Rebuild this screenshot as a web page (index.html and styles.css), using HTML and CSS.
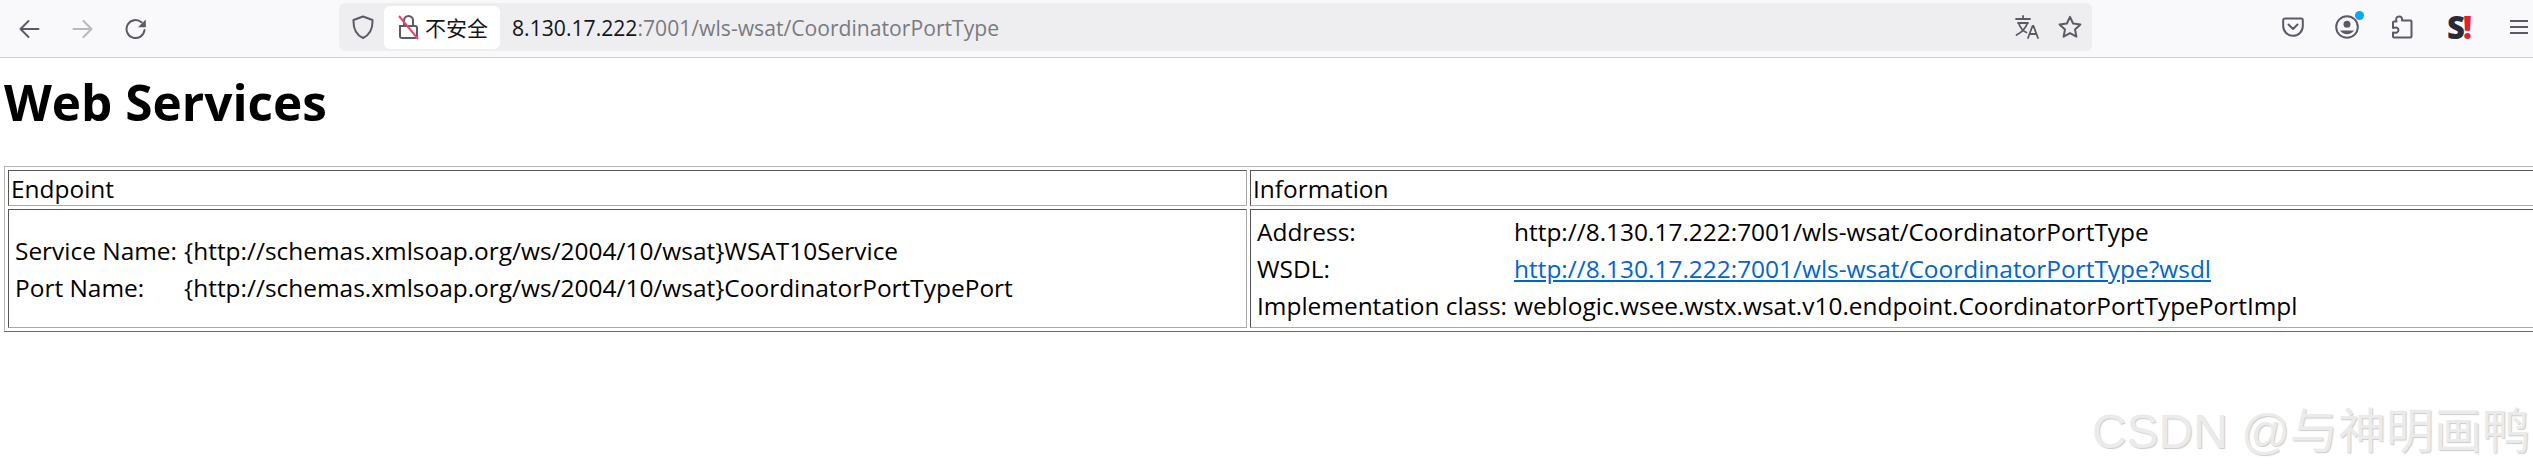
FILE: index.html
```html
<!DOCTYPE html>
<html lang="zh">
<head>
<meta charset="utf-8">
<title>Web Services</title>
<link rel="stylesheet" href="styles.css">
</head>
<body>
<header class="toolbar">
  <svg class="ico nav-back" viewBox="0 0 22 22"><path d="M20.500 11H2.500M10.500 3l-8 8 8 8"/></svg>
  <svg class="ico nav-forward" viewBox="0 0 22 22"><path d="M1.500 11h18M11.500 3l8 8-8 8"/></svg>
  <svg class="ico nav-reload" viewBox="0 0 22 22"><path d="M19.500 12a9 9 0 1 1-3-7.700"/><path class="solid" d="M20.800 1.500v7.800h-7.800z"/></svg>
  <div class="urlbar">
    <svg class="ico shield" viewBox="0 0 22 24"><path d="M11 1.500 20.500 5c.3 8.500-2 14.500-9.500 18C3.500 19.500 1.200 13.500 1.500 5z"/></svg>
    <div class="chip">
      <svg class="lock" viewBox="0 0 22 26"><path class="lk" d="M2 12h15a2 2 0 0 1 2 2v8a2 2 0 0 1-2 2H4a2 2 0 0 1-2-2zM6 11V6.500a4.500 4.500 0 0 1 9 0V11"/><path class="slash" d="M1 2l19 23"/></svg>
      <span>不安全</span>
    </div>
    <div class="url"><span class="host">8.130.17.222</span>:7001/wls-wsat/CoordinatorPortType</div>
    <svg class="ico translate" viewBox="0 0 24 24"><path d="M1 4h14M8 1v3M3 8h10M3.500 8c2 5 5 8.500 8 9.500M12.500 8c-1.500 4-5 9-11 12"/><path d="M13 23l4.500-12h1l4.500 12M14.500 19h7"/></svg>
    <svg class="ico star" viewBox="0 0 24 24"><path d="M12 1.800l3.100 6.700 7.300.9-5.400 5 1.400 7.300-6.400-3.600-6.400 3.600L7 14.400l-5.400-5 7.300-.9z"/></svg>
  </div>
  <div class="actions">
    <svg class="ico pocket" viewBox="0 0 22 20"><path d="M3 1.500h16a1.800 1.800 0 0 1 1.800 1.800V9a9.800 9.800 0 0 1-19.600 0V3.300A1.800 1.800 0 0 1 3 1.500z"/><path d="M6.500 7.500 11 12l4.500-4.500"/></svg>
    <div class="account">
      <svg class="ico" viewBox="0 0 24 24"><circle cx="12" cy="12" r="10.800"/><circle class="solid" cx="12" cy="9.200" r="3.500"/><path class="solid" d="M5 15.500h14a8.500 8.500 0 0 1-14 0z"/></svg>
      <span class="dot"></span>
    </div>
    <svg class="ico puzzle" viewBox="0 0 22 24"><path d="M8 1.500c2.500 0 3.500 1.500 3 4h8.500a1 1 0 0 1 1 1v15a1 1 0 0 1-1 1H3a1 1 0 0 1-1-1v-4c3 1 5.500-.2 5.500-2.500S5 12 2 13V7.500a1 1 0 0 1 1-1h2.500C4.500 3.500 5.500 1.500 8 1.500z"/></svg>
    <div class="logo"><span class="logo-s">S</span><span class="logo-bang">!</span></div>
    <svg class="ico menu" viewBox="0 0 18 16"><path d="M0 2h18M0 8h18M0 14h18"/></svg>
  </div>
</header>

<h1 class="title">Web Services</h1>

<table class="services" border="1">
  <tr>
    <td class="col-endpoint">Endpoint</td>
    <td>Information</td>
  </tr>
  <tr>
    <td>
      <table class="kv">
        <tr><td>Service Name:</td><td>{http://schemas.xmlsoap.org/ws/2004/10/wsat}WSAT10Service</td></tr>
        <tr><td>Port Name:</td><td>{http://schemas.xmlsoap.org/ws/2004/10/wsat}CoordinatorPortTypePort</td></tr>
      </table>
    </td>
    <td>
      <table class="kv">
        <tr><td>Address:</td><td>http://8.130.17.222:7001/wls-wsat/CoordinatorPortType</td></tr>
        <tr><td>WSDL:</td><td><a href="#">http://8.130.17.222:7001/wls-wsat/CoordinatorPortType?wsdl</a></td></tr>
        <tr><td>Implementation class:</td><td>weblogic.wsee.wstx.wsat.v10.endpoint.CoordinatorPortTypePortImpl</td></tr>
      </table>
    </td>
  </tr>
</table>

<div class="watermark">CSDN @与神明画鸭</div>
</body>
</html>
```
FILE: styles.css
```css
html, body {
  margin: 0;
  padding: 0;
  background: #fff;
  overflow: hidden;
  height: 472px;
}
body {
  font-family: "Open Sans", "Noto Sans CJK SC", sans-serif;
  font-size: 24.45px;
  line-height: 31px;
  color: #000;
  position: relative;
}
.toolbar {
  display: flex;
  align-items: center;
  height: 57px;
  background: #f9f9fb;
  border-bottom: 1px solid #cfcfd3;
  box-sizing: content-box;
  padding-left: 18px;
}
.ico {
  fill: none;
  stroke: #5b5b66;
  stroke-width: 2;
  stroke-linecap: round;
  stroke-linejoin: round;
  flex: none;
  display: block;
}
.ico .solid { fill: #5b5b66; stroke: none; }
.nav-back { width: 22px; height: 22px; }
.nav-forward { width: 22px; height: 22px; margin-left: 32px; opacity: .4; }
.nav-reload { width: 22px; height: 22px; margin-left: 31px; }
.urlbar {
  display: flex;
  align-items: center;
  width: 1753px;
  height: 48px;
  margin-left: 192px;
  margin-top: -3px;
  background: #eeeef1;
  border-radius: 6px;
  padding-left: 13px;
  box-sizing: border-box;
}
.shield { width: 22px; height: 24px; }
.chip {
  display: flex;
  align-items: center;
  height: 43px;
  width: 116px;
  margin-left: 10px;
  padding-left: 14px;
  box-sizing: border-box;
  background: #fff;
  border-radius: 6px;
  font-size: 21px;
  color: #15141a;
  font-family: "Noto Sans CJK SC", sans-serif;
}
.lock { width: 22px; height: 26px; flex: none; margin-right: 5px; fill: none; }
.lk { stroke: #5b5b66; stroke-width: 2; }
.slash { stroke: #f0446c; stroke-width: 2; }
.url {
  margin-left: 12px;
  font-size: 21.15px;
  color: #7a7a80;
  flex: 1;
  white-space: nowrap;
}
.host { color: #15141a; }
.translate { width: 24px; height: 24px; margin-right: 19px; stroke-width: 1.800; }
.star { width: 24px; height: 24px; margin-right: 10px; }
.actions {
  display: flex;
  align-items: center;
  margin-left: 190px;
  margin-top: -3px;
}
.pocket { width: 22px; height: 20px; }
.account { position: relative; width: 24px; height: 24px; margin-left: 31px; }
.account .ico { width: 24px; height: 24px; }
.dot {
  position: absolute;
  right: -5px;
  top: -4px;
  width: 9px;
  height: 9px;
  border-radius: 50%;
  background: #0ea5f5;
}
.puzzle { width: 22px; height: 24px; margin-left: 32px; }
.logo {
  display: flex;
  align-items: center;
  width: 26px;
  height: 30px;
  margin-left: 34px;
  font-family: "Open Sans", sans-serif;
  font-weight: 800;
  font-size: 31px;
  line-height: 30px;
}
.logo-s { color: #2b2a3a; }
.logo-bang { color: #e5202e; margin-left: -2px; }
.menu { width: 18px; height: 16px; margin-left: 37px; }

.title {
  font-size: 49.500px;
  font-weight: 700;
  margin: 0;
  padding: 16px 0 0 4px;
  line-height: 56px;
}
.services {
  margin: 36px 0 0 4px;
  border: 1px solid;
  border-color: #b5b5b5 #666 #666 #b5b5b5;
  border-spacing: 3px;
  width: 2660px;
  table-layout: fixed;
}
.services > tbody > tr > td {
  border: 1px solid;
  border-color: #555 #aaa #aaa #555;
  padding: 2px 1px 1px 2px;
}
.col-endpoint { width: 1234px; }
.kv { border-spacing: 3px; border-collapse: separate; }
.kv td { padding: 1px 3px 2px 1px; white-space: nowrap; border: 0; }
a { color: #0066cc; }
.watermark {
  position: absolute;
  right: 3px;
  bottom: 15px;
  font-family: "Liberation Sans", "Noto Sans CJK SC", sans-serif;
  font-size: 48px;
  line-height: 50px;
  color: #ebebeb;
  text-shadow: 1px 1px 1px #cccccc;
}
```
